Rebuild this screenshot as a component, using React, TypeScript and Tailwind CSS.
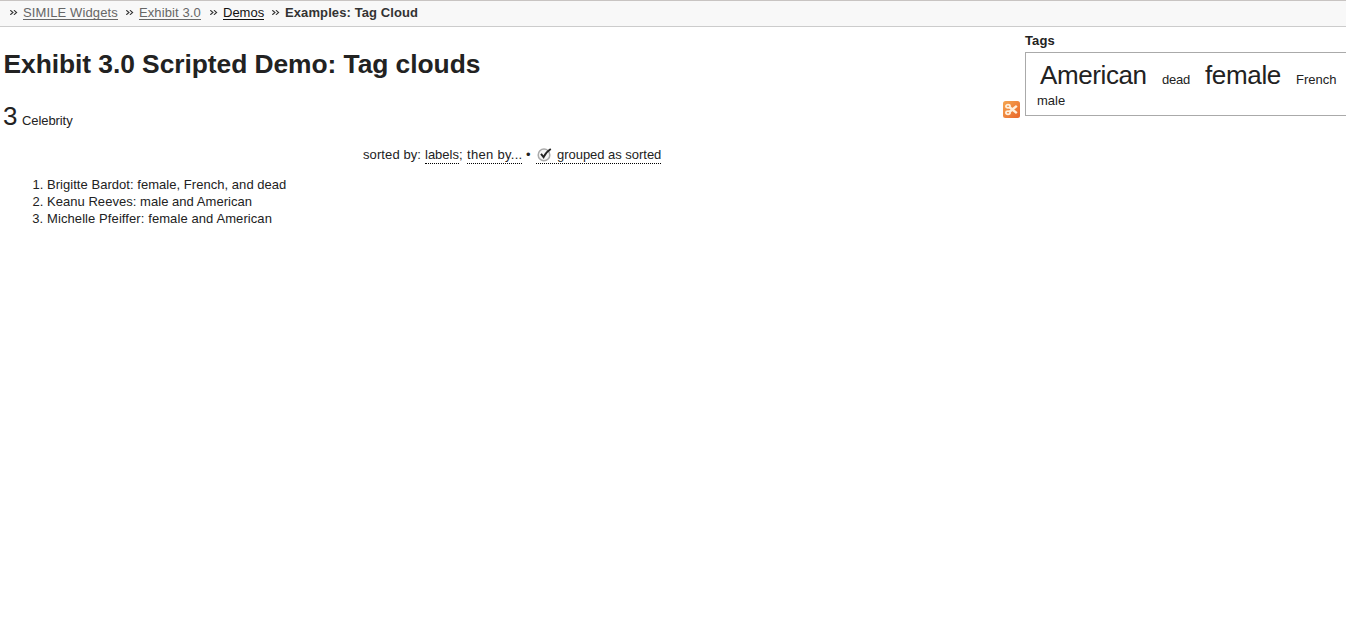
import React from "react";

function Crumb({ label, tone, className = "" }: { label: string; tone: string; className?: string }) {
  return (
    <li className={`flex ${className}`}>
      <svg className="mt-[5px] mr-[5px] h-[5px] w-[8px]" viewBox="0 0 8 5" fill="none" stroke="#333" strokeWidth="1.1">
        <path d="M.3.2 3 2.5.3 4.8M3.9.2 6.6 2.5 3.9 4.8" />
      </svg>
      <span className={`h-[15px] leading-[15px] ${tone}`}>{label}</span>
    </li>
  );
}

function CheckIcon() {
  return (
    <svg className="mr-[5px] h-4 w-4" viewBox="0 0 16 16" fill="none">
      <circle cx="8" cy="8.9" r="5.8" fill="#f4f4f4" stroke="#aaa" strokeWidth="1.5" />
      <path d="m5 7.8 2.6 3.3C9.2 7.6 11.1 5.3 14.8 3" stroke="#222" strokeWidth="1.9" />
    </svg>
  );
}

function ScissorsIcon() {
  return (
    <svg className="h-[17px] w-[17px]" viewBox="0 0 17 17" fill="none">
      <defs>
        <linearGradient id="orange" x1="0" y1="0" x2="1" y2="1">
          <stop stopColor="#f5a650" />
          <stop offset="1" stopColor="#e86529" />
        </linearGradient>
      </defs>
      <rect width="17" height="17" rx="2.5" fill="url(#orange)" />
      <g stroke="#fff0dc" strokeWidth="1.7">
        <ellipse cx="5" cy="5.2" rx="2.1" ry="1.6" />
        <ellipse cx="5" cy="11.8" rx="2.1" ry="1.6" />
        <path d="m6.6 6.3 7.2 5.8M6.6 10.7l7.2-5.8" strokeWidth="2.5" />
      </g>
    </svg>
  );
}

export default function App() {
  return (
    <div className="h-[624px] overflow-hidden bg-white font-['Liberation_Sans',sans-serif] text-[13px] leading-[17px] text-[#222]">
      <nav className="h-[27px] border-y border-t-[#c8c4c2] border-b-[#ccc] bg-[#f8f8f8] pt-[4px] pl-[10px]">
        <ul className="flex">
          <Crumb label="SIMILE Widgets" tone="border-b border-[#666] text-[#666] tracking-[0.12px]" className="w-[116px]" />
          <Crumb label="Exhibit 3.0" tone="border-b border-[#666] text-[#666] tracking-[0.1px]" className="w-[84px]" />
          <Crumb label="Demos" tone="border-b border-[#111] text-[#111]" className="w-[62px]" />
          <Crumb label="Examples: Tag Cloud" tone="font-bold text-[#333] tracking-[0.1px]" />
        </ul>
      </nav>
      <div className="flex">
        <main className="w-[1003px] shrink-0 pl-[3px]">
          <h1 className="mt-[20px] pl-[0.5px] text-[26.4px] leading-[34px] font-bold tracking-[-0.06px] whitespace-nowrap">Exhibit 3.0 Scripted Demo: Tag clouds</h1>
          <p className="mt-[18px] flex h-[34px] items-baseline leading-[34px]">
            <span className="w-[19px] text-[26px]">3</span>
            <span className="tracking-[-0.08px]">Celebrity</span>
          </p>
          <div className="mt-[13px] flex h-[18px] pl-[360px] whitespace-nowrap">
            <span className="w-[62px] tracking-[0.1px]">sorted by:</span>
            <span className="w-[34px] border-b border-dotted border-black">labels</span>
            <span className="w-[8px]">;</span>
            <span className="w-[55px] border-b border-dotted border-black tracking-[0.3px]">then by...</span>
            <span className="w-[14px] pl-[4px]">•</span>
            <span className="flex border-b border-dotted border-black tracking-[-0.03px]">
              <CheckIcon />grouped as sorted
            </span>
          </div>
          <ol className="mt-[12px] list-decimal pl-[44px]">
            <li className="tracking-[0.04px]">Brigitte Bardot: female, French, and dead</li>
            <li className="tracking-[0.04px]">Keanu Reeves: male and American</li>
            <li className="tracking-[0.09px]">Michelle Pfeiffer: female and American</li>
          </ol>
        </main>
        <div className="w-[22px] shrink-0 pt-[74px]">
          <ScissorsIcon />
        </div>
        <aside className="w-[330px] shrink-0 pt-[5px]">
          <h2 className="font-bold tracking-[0.1px]">Tags</h2>
          <div className="mt-[3px] h-[64px] border border-[#aaa]">
            <div className="flex h-[39px] items-baseline pt-[5px] pl-[14px] leading-[34px]">
              <span className="w-[122px] text-[26px] tracking-[-0.4px]">American</span>
              <span className="w-[43px] tracking-[-0.2px]">dead</span>
              <span className="w-[91px] text-[26px] tracking-[-0.35px]">female</span>
              <span>French</span>
            </div>
            <div className="pl-[11px]">male</div>
          </div>
        </aside>
      </div>
    </div>
  );
}
